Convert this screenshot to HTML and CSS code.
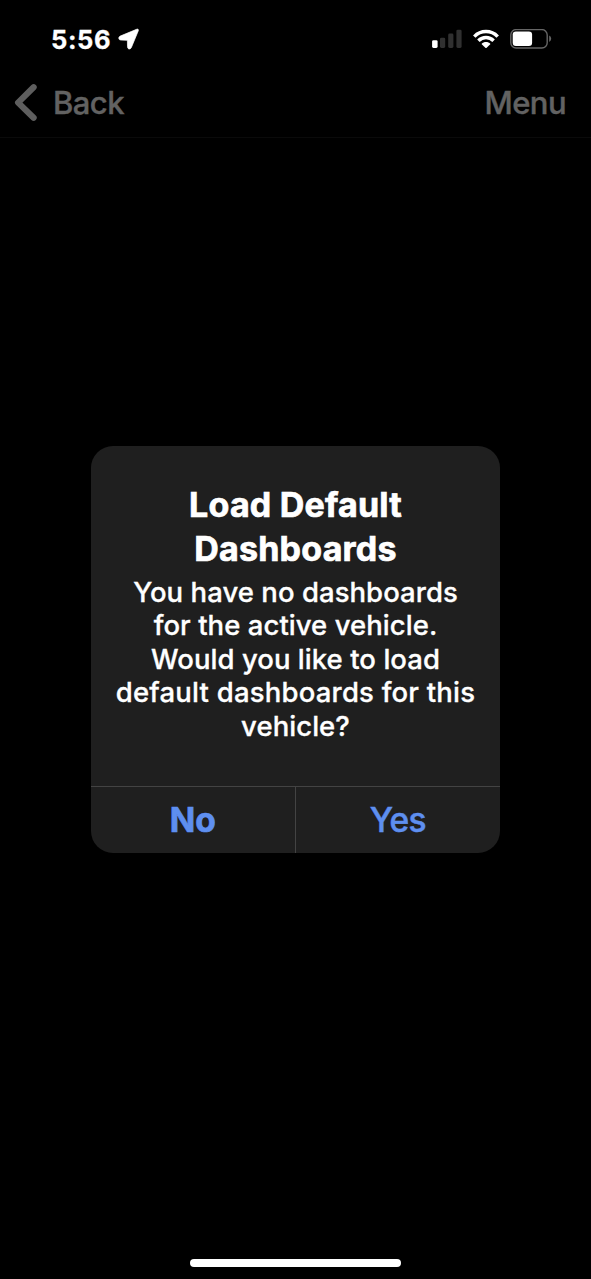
FILE: index.html
```html
<!DOCTYPE html>
<html lang="en">
<head>
<meta charset="utf-8">
<title>Dashboards</title>
<link rel="stylesheet" href="styles.css">
</head>
<body>
<div class="screen">
  <header class="status">
    <div class="status-left">
      <span class="time">5:56</span>
      <svg class="location" width="22" height="22" viewBox="0 0 22 22"><path d="M18.6 1.3 2.2 8.1C.2 9 .4 11.9 2.6 12L9 12.3Q9.4 12.3 9.4 12.7L9.5 18.7C9.6 21.4 12.3 21.8 13.4 19.4L20.2 3C20.8 1.5 20 .7 18.6 1.3Z" fill="#fff" stroke="#fff" stroke-width=".7"/></svg>
    </div>
    <div class="status-right">
      <svg width="30" height="20" viewBox="0 0 30 20"><g fill="#303030"><rect x="8" y="8.7" width="5.2" height="10.3" rx="1.4"/><rect x="16.2" y="4.5" width="5.2" height="14.5" rx="1.4"/><rect x="24.4" y=".7" width="5.2" height="18.3" rx="1.4"/></g><rect x=".1" y="11.2" width="5.5" height="7.8" rx="1.4" fill="#fff"/></svg>
      <svg class="wifi" width="26" height="20" viewBox="0 0 26 20"><g fill="none" stroke="#fff" stroke-width="3.5"><path d="M1.3 7.6C7.8 .9 18.2 .9 24.7 7.6"/><path d="M5.4 11.8C9.7 7.5 16.3 7.5 20.6 11.8"/></g><path d="M8.5 14.9C11 12.5 15 12.5 17.5 14.9L13.7 18.7Q13 19.3 12.3 18.7Z" fill="#fff"/></svg>
      <svg class="battery" width="42" height="20" viewBox="0 0 42 20"><rect x=".8" y=".6" width="36.4" height="18.4" rx="5.3" fill="none" stroke="#666" stroke-width="1.4"/><rect x="2.7" y="2.4" width="19.4" height="14.6" rx="3.2" fill="#fff"/><path d="M39.2 6.6Q41.2 7.7 41.2 9.8T39.2 13Z" fill="#666"/></svg>
    </div>
  </header>
  <nav class="nav">
    <a class="back"><svg width="24" height="40" viewBox="0 0 24 40"><path d="M19.6 4.2 4.1 19.6 19.6 34.8" fill="none" stroke="#5e5e5e" stroke-width="6.2" stroke-linecap="round" stroke-linejoin="round"/></svg><span class="back-label">Back</span></a>
    <a class="menu">Menu</a>
  </nav>
  <main class="content">
    <section class="alert">
      <h1 class="title">Load Default<br>Dashboards</h1>
      <p class="message">You have no dashboards<br>for the active vehicle.<br>Would you like to load<br><span class="wide">default dashboards for this</span><br>vehicle?</p>
      <div class="actions">
        <button class="action action-no">No</button>
        <button class="action action-yes">Yes</button>
      </div>
    </section>
  </main>
  <footer class="home"></footer>
</div>
</body>
</html>
```
FILE: styles.css
```css
* { box-sizing: border-box; }
body { margin: 0; background: #000; font-family: Inter, "Liberation Sans", sans-serif; }
svg { display: block; }
.screen { width: 591px; height: 1279px; display: flex; flex-direction: column; background: #000; overflow: hidden; }
.status { height: 68px; padding: 0 39.5px 0 51px; display: flex; justify-content: space-between; }
.status-left { display: flex; padding-top: 24px; }
.time { width: 67px; font-size: 25.5px; line-height: 31px; font-weight: 700; letter-spacing: .6px; color: #fff; white-space: nowrap; -webkit-text-stroke: .3px #fff; }
.location { margin-top: 4px; }
.status-right { display: flex; padding-top: 29px; }
.wifi { margin-left: 11px; }
.battery { margin-left: 11px; }
.nav { height: 70px; padding: 0 25px 0 14px; display: flex; justify-content: space-between; border-bottom: 1px solid #0a0a0a; font-size: 31px; line-height: 69px; font-weight: 500; color: #626262; letter-spacing: -.55px; -webkit-text-stroke: .4px #626262; }
.back { display: flex; align-items: center; }
.back svg { margin-top: 1px; }
.back-label { margin-left: 15px; }
.content { flex: 1; padding: 307.5px 91px 0; }
.alert { height: 407.5px; border-radius: 22px; background: #1f1f1f; overflow: hidden; padding-top: 37.5px; text-align: center; color: #fff; display: flex; flex-direction: column; }
.title { margin: 0; font-size: 34px; line-height: 44px; font-weight: 700; letter-spacing: .2px; white-space: nowrap; -webkit-text-stroke: .7px #fff; }
.message { margin: 5px 0 0; font-size: 27.5px; line-height: 33.45px; font-weight: 500; letter-spacing: .05px; white-space: nowrap; -webkit-text-stroke: .3px #fff; }
.wide { letter-spacing: .2px; }
.actions { margin-top: auto; height: 67.5px; display: grid; grid-template-columns: 1fr 1fr; border-top: 1px solid #434343; }
.action { border: 0; padding: 0; background: none; font-family: inherit; font-size: 33.5px; line-height: 67px; color: #5e8ff0; }
.action-no { font-weight: 700; border-right: 1px solid #434343; -webkit-text-stroke: .7px #5e8ff0; }
.action-yes { font-weight: 500; letter-spacing: -.7px; -webkit-text-stroke: .5px #5e8ff0; }
.home { width: 211px; height: 8px; border-radius: 4px; background: #fff; margin: 0 auto 12px; }
```
